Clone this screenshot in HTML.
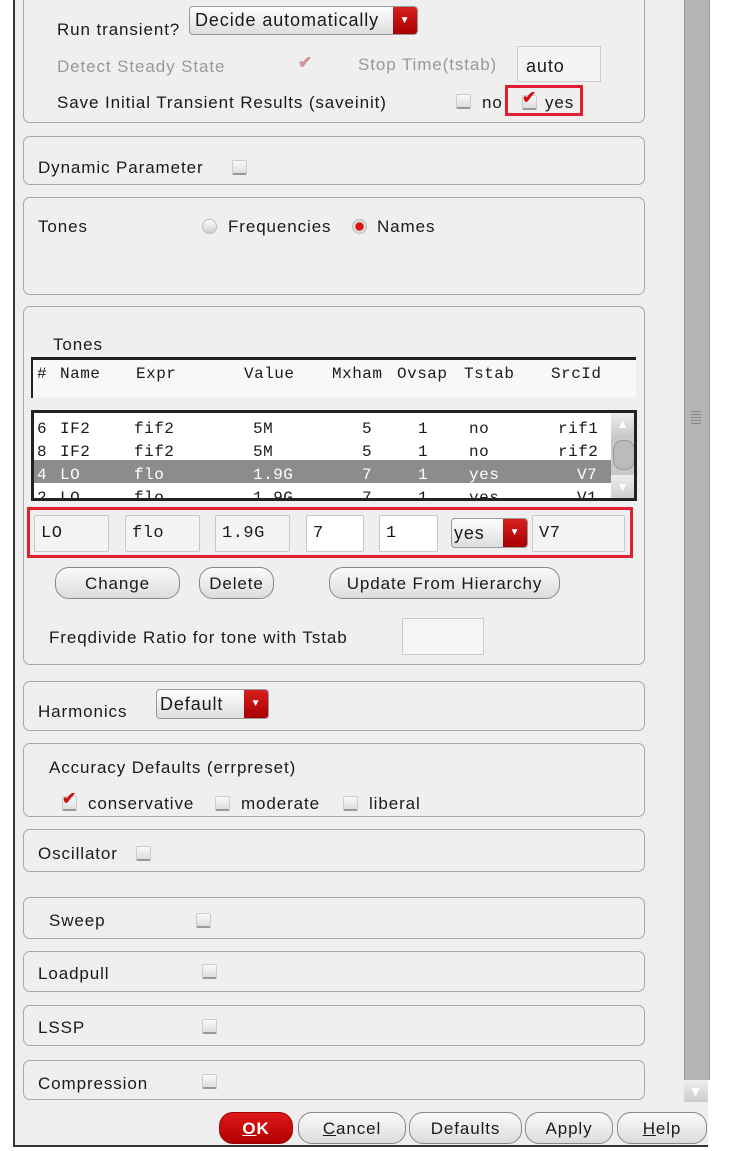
<!DOCTYPE html>
<html><head><meta charset="utf-8"><style>
body{margin:0;width:746px;height:1151px;position:relative;overflow:hidden;background:#fff;font-family:"Liberation Sans",sans-serif;font-size:17px;letter-spacing:0.9px;color:#1a1a1a}
.a{position:absolute;white-space:nowrap}
.main{position:absolute;left:13px;top:0;width:693px;height:1145px;background:#eeeeee;border-left:2px solid #333;border-bottom:2px solid #333}
.box{position:absolute;left:23px;width:620px;border:1px solid #a8a8a8;border-radius:7px;background:#efefef}
.cb{position:absolute;width:13px;height:12px;border:1px solid #ccc;border-bottom:2px solid #999;background:linear-gradient(#fafafa,#ddd);border-radius:2px}
.chk{position:absolute;color:#d01010;font-size:17px;font-weight:bold}
.inp{position:absolute;background:#f4f4f4;border:1px solid #c8c8c8;border-radius:2px;font-family:"Liberation Mono",monospace;font-size:17px;letter-spacing:0.5px;line-height:36px;padding-left:6px;box-sizing:border-box}
.btn{position:absolute;height:32px;border:1px solid #888;border-radius:14px;background:linear-gradient(#fbfbfb,#dcdcdc);text-align:center;line-height:32px;font-size:17px;box-sizing:border-box}
.dd{position:absolute;border:1px solid #999;border-radius:4px;background:linear-gradient(#fff,#ddd);box-sizing:border-box;overflow:hidden}
.dd .r{position:absolute;right:0;top:0;bottom:0;width:24px;background:linear-gradient(#d82020,#a80000);color:#fff;font-size:10px;text-align:center}
.row{position:absolute;left:0;height:23px;width:580px;font-family:"Liberation Mono",monospace;font-size:16px;letter-spacing:0.5px;line-height:23px}
.row span{position:absolute}
</style></head><body>
<div class="main"></div>
<div class="a" style="left:684px;top:0;width:24px;height:1080px;background:#b5b5b5;border-left:1px solid #999;border-right:1px solid #999"></div>
<div class="a" style="left:691px;top:411px;width:10px;height:14px;background:repeating-linear-gradient(#888 0 1px,transparent 1px 3px)"></div>
<div class="a" style="left:684px;top:1080px;width:24px;height:22px;background:linear-gradient(#eee,#ccc);color:#fff;text-align:center;font-size:14px;line-height:22px">▼</div>

<div class="box" style="top:-6px;height:127px"></div>
<div class="a" style="left:57px;top:20px">Run transient?</div>
<div class="dd" style="left:189px;top:6px;width:229px;height:29px"><span class="a" style="left:5px;top:3px;font-size:18px">Decide automatically</span><div class="r" style="line-height:27px">▼</div></div>
<div class="a" style="left:57px;top:57px;color:#999">Detect Steady State</div>
<div class="chk" style="left:298px;top:53px;color:#d59090">✔</div>
<div class="a" style="left:358px;top:55px;color:#999">Stop Time(tstab)</div>
<div class="a" style="left:517px;top:46px;width:82px;height:34px;background:#f4f4f4;border:1px solid #ccc"></div>
<div class="a" style="left:526px;top:56px;font-size:18px">auto</div>
<div class="a" style="left:57px;top:93px">Save Initial Transient Results (saveinit)</div>
<div class="cb" style="left:456px;top:94px"></div>
<div class="a" style="left:482px;top:93px">no</div>
<div class="a" style="left:505px;top:85px;width:78px;height:31px;border:3px solid #e02030;box-sizing:border-box"></div>
<div class="cb" style="left:522px;top:95px"></div><div class="chk" style="left:522px;top:88px">✔</div>
<div class="a" style="left:545px;top:93px">yes</div>

<div class="box" style="top:136px;height:47px"></div>
<div class="a" style="left:38px;top:158px">Dynamic Parameter</div>
<div class="cb" style="left:232px;top:160px"></div>

<div class="box" style="top:197px;height:96px"></div>
<div class="a" style="left:38px;top:217px">Tones</div>
<div class="a" style="left:202px;top:219px;width:13px;height:13px;border-radius:50%;background:linear-gradient(#fff,#ccc);border:1px solid #bbb"></div>
<div class="a" style="left:228px;top:217px">Frequencies</div>
<div class="a" style="left:352px;top:219px;width:13px;height:13px;border-radius:50%;background:radial-gradient(#e01010 40%,#ddd 50%);border:1px solid #bbb"></div>
<div class="a" style="left:377px;top:217px">Names</div>

<div class="box" style="top:306px;height:357px"></div>
<div class="a" style="left:53px;top:335px">Tones</div>
<div class="a" style="left:31px;top:357px;width:605px;height:41px;background:#f8f8f8;border-top:3px solid #222;border-left:2px solid #222;box-sizing:border-box"></div>
<div class="row" style="left:37px;top:363px"><span style="left:0">#</span><span style="left:23px">Name</span><span style="left:99px">Expr</span><span style="left:207px">Value</span><span style="left:295px">Mxham</span><span style="left:360px">Ovsap</span><span style="left:427px">Tstab</span><span style="left:514px">SrcId</span></div>
<div class="a" style="left:31px;top:410px;width:606px;height:91px;background:#fff;border:3px solid #222;box-sizing:border-box;overflow:hidden">
<div class="a" style="left:0;top:47px;width:580px;height:23px;background:#8c8c8c"></div>
<div class="row" style="left:3px;top:5px"><span style="left:0">6</span><span style="left:23px">IF2</span><span style="left:97px">fif2</span><span style="left:216px">5M</span><span style="left:325px">5</span><span style="left:381px">1</span><span style="left:432px">no</span><span style="left:521px">rif1</span></div>
<div class="row" style="left:3px;top:28px"><span style="left:0">8</span><span style="left:23px">IF2</span><span style="left:97px">fif2</span><span style="left:216px">5M</span><span style="left:325px">5</span><span style="left:381px">1</span><span style="left:432px">no</span><span style="left:521px">rif2</span></div>
<div class="row" style="left:3px;top:51px;color:#fff"><span style="left:0">4</span><span style="left:23px">LO</span><span style="left:97px">flo</span><span style="left:216px">1.9G</span><span style="left:325px">7</span><span style="left:381px">1</span><span style="left:432px">yes</span><span style="left:540px">V7</span></div>
<div class="row" style="left:3px;top:74px"><span style="left:0">2</span><span style="left:23px">LO</span><span style="left:97px">flo</span><span style="left:216px">1.9G</span><span style="left:325px">7</span><span style="left:381px">1</span><span style="left:432px">yes</span><span style="left:540px">V1</span></div>
<div class="a" style="left:577px;top:0;width:24px;height:88px;background:#c8c8c8"></div>
<div class="a" style="left:577px;top:0;width:24px;height:22px;background:linear-gradient(#eee,#ccc);color:#fff;text-align:center;font-size:12px;line-height:22px">▲</div>
<div class="a" style="left:579px;top:27px;width:20px;height:28px;border-radius:10px;background:#bbb;border:1px solid #999"></div>
<div class="a" style="left:577px;top:62px;width:24px;height:24px;background:linear-gradient(#eee,#ccc);color:#fff;text-align:center;font-size:12px;line-height:24px">▼</div>
</div>
<div class="a" style="left:27px;top:507px;width:606px;height:51px;border:3px solid #e02030;box-sizing:border-box"></div>
<div class="inp" style="left:34px;top:515px;width:75px;height:37px">LO</div>
<div class="inp" style="left:125px;top:515px;width:75px;height:37px">flo</div>
<div class="inp" style="left:215px;top:515px;width:75px;height:37px">1.9G</div>
<div class="inp" style="left:306px;top:515px;width:58px;height:37px;background:#fff">7</div>
<div class="inp" style="left:379px;top:515px;width:59px;height:37px;background:#fff">1</div>
<div class="dd" style="left:451px;top:518px;width:77px;height:30px"><span class="a" style="left:2px;top:4px;font-size:18px">yes</span><div class="r" style="line-height:28px">▼</div></div>
<div class="inp" style="left:532px;top:515px;width:93px;height:37px">V7</div>
<div class="btn" style="left:55px;top:567px;width:125px">Change</div>
<div class="btn" style="left:199px;top:567px;width:75px">Delete</div>
<div class="btn" style="left:329px;top:567px;width:231px">Update From Hierarchy</div>
<div class="a" style="left:49px;top:628px">Freqdivide Ratio for tone with Tstab</div>
<div class="a" style="left:402px;top:618px;width:80px;height:35px;background:#f6f6f6;border:1px solid #ccc"></div>

<div class="box" style="top:681px;height:48px"></div>
<div class="a" style="left:38px;top:702px">Harmonics</div>
<div class="dd" style="left:156px;top:689px;width:113px;height:30px"><span class="a" style="left:3px;top:4px;font-size:18px">Default</span><div class="r" style="line-height:28px">▼</div></div>

<div class="box" style="top:743px;height:72px"></div>
<div class="a" style="left:49px;top:758px">Accuracy Defaults (errpreset)</div>
<div class="cb" style="left:62px;top:796px"></div><div class="chk" style="left:62px;top:789px">✔</div>
<div class="a" style="left:88px;top:794px">conservative</div>
<div class="cb" style="left:215px;top:796px"></div>
<div class="a" style="left:241px;top:794px">moderate</div>
<div class="cb" style="left:343px;top:796px"></div>
<div class="a" style="left:369px;top:794px">liberal</div>

<div class="box" style="top:829px;height:41px"></div>
<div class="a" style="left:38px;top:844px">Oscillator</div>
<div class="cb" style="left:136px;top:846px"></div>

<div class="box" style="top:897px;height:40px"></div>
<div class="a" style="left:49px;top:911px">Sweep</div>
<div class="cb" style="left:196px;top:913px"></div>
<div class="box" style="top:951px;height:39px"></div>
<div class="a" style="left:38px;top:964px">Loadpull</div>
<div class="cb" style="left:202px;top:964px"></div>
<div class="box" style="top:1005px;height:39px"></div>
<div class="a" style="left:38px;top:1018px">LSSP</div>
<div class="cb" style="left:202px;top:1019px"></div>
<div class="box" style="top:1060px;height:38px"></div>
<div class="a" style="left:38px;top:1074px">Compression</div>
<div class="cb" style="left:202px;top:1074px"></div>

<div class="btn" style="left:219px;top:1112px;width:74px;background:linear-gradient(#e01818,#b00000);color:#fff;font-weight:bold;border-color:#900"><u>O</u>K</div>
<div class="btn" style="left:298px;top:1112px;width:108px"><u>C</u>ancel</div>
<div class="btn" style="left:409px;top:1112px;width:113px">Defaults</div>
<div class="btn" style="left:525px;top:1112px;width:88px">Apply</div>
<div class="btn" style="left:617px;top:1112px;width:90px"><u>H</u>elp</div>
</body></html>
